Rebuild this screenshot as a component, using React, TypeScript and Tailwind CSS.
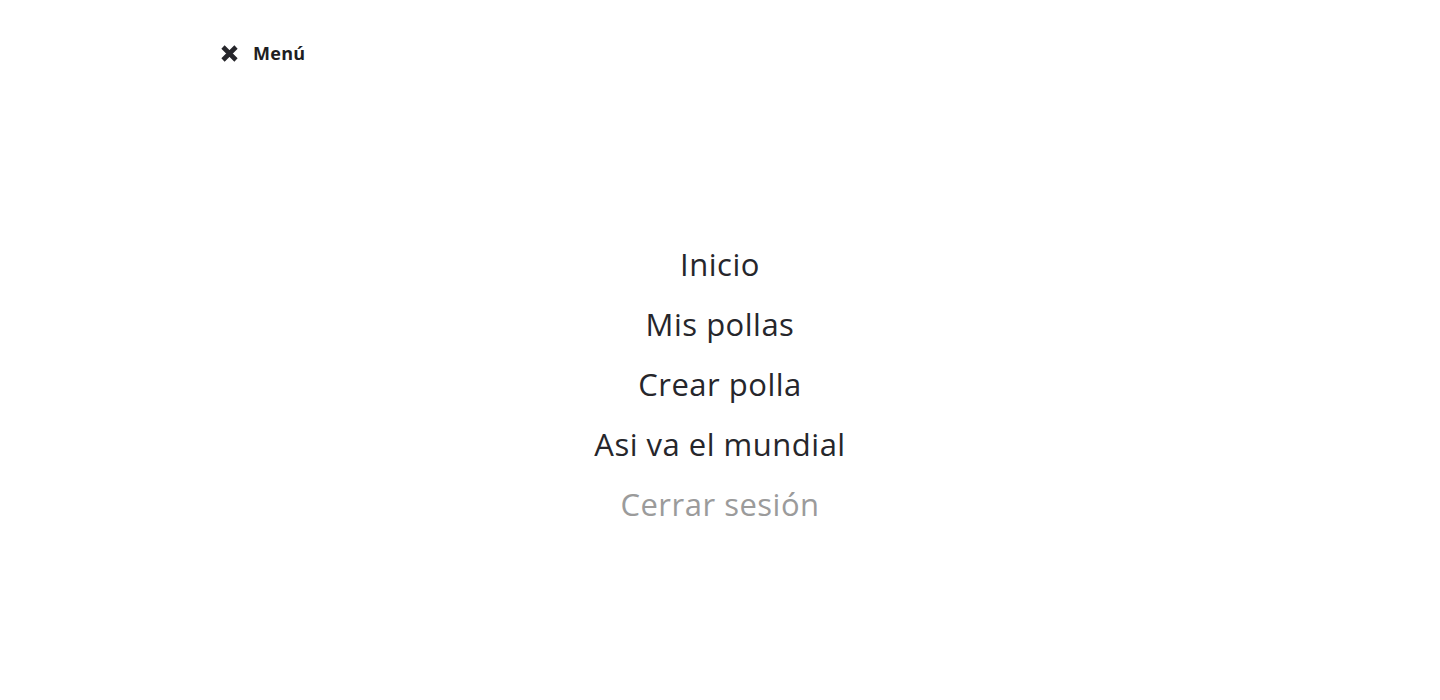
import React from "react";

const items = [
  { label: "Inicio", muted: false },
  { label: "Mis pollas", muted: false },
  { label: "Crear polla", muted: false },
  { label: "Asi va el mundial", muted: false },
  { label: "Cerrar sesión", muted: true },
];

const CloseIcon = () => (
  <svg width="19" height="19" viewBox="0 0 19 19" className="text-[#26262b]">
    <path d="M3 3 L16 16 M16 3 L3 16" stroke="currentColor" strokeWidth="4.6" strokeLinecap="butt" />
  </svg>
);

const App = () => {
  return (
    <div
      className="w-full h-[700px] bg-white"
      style={{ fontFamily: '"Open Sans", "Noto Sans", sans-serif' }}
    >
      {/* Header */}
      <div className="w-[1000px] mx-auto pt-[43px] flex items-center">
        <button className="flex items-center gap-[14px] cursor-pointer">
          <CloseIcon />
          <span className="text-[18px] font-bold text-[#1e1e22] leading-[20px] tracking-[0.3px]">Menú</span>
        </button>
      </div>

      {/* Navigation */}
      <nav className="mt-[171px] flex flex-col items-center">
        {items.map((item) => (
          <a
            key={item.label}
            href="#"
            className={`text-[31px] leading-[60px] tracking-[0.5px] font-medium ${
              item.muted ? "text-[#9b9b9b]" : "text-[#26262b]"
            }`}
          >
            {item.label}
          </a>
        ))}
      </nav>
    </div>
  );
};

export default App;
